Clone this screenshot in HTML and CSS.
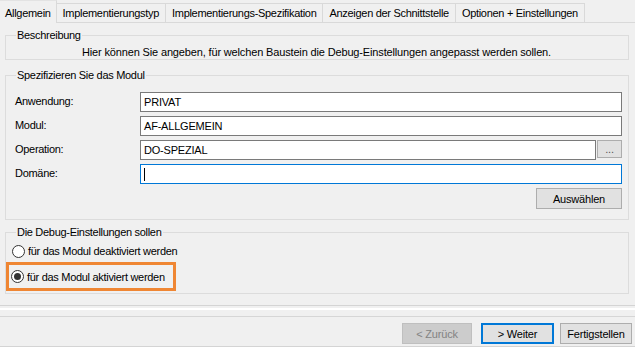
FILE: index.html
```html
<!DOCTYPE html>
<html lang="de">
<head>
  <meta charset="UTF-8">
  <title>Debug-Einstellungen</title>
  <link rel="stylesheet" href="styles.css">
</head>
<body>
  <div class="dialog">
    <div class="tabs">
      <div class="tab active">Allgemein</div>
      <div class="tab">Implementierungstyp</div>
      <div class="tab">Implementierungs-Spezifikation</div>
      <div class="tab">Anzeigen der Schnittstelle</div>
      <div class="tab">Optionen + Einstellungen</div>
    </div>

    <div class="panel">
      <!-- Beschreibung -->
      <fieldset class="group group-desc">
        <legend>Beschreibung</legend>
        <div class="desc">Hier können Sie angeben, für welchen Baustein die Debug-Einstellungen angepasst werden sollen.</div>
      </fieldset>

      <!-- Modul -->
      <fieldset class="group group-module">
        <legend>Spezifizieren Sie das Modul</legend>
        <div class="field">
          <label>Anwendung:</label>
          <div class="input">PRIVAT</div>
        </div>
        <div class="field">
          <label>Modul:</label>
          <div class="input">AF-ALLGEMEIN</div>
        </div>
        <div class="field">
          <label>Operation:</label>
          <div class="input">DO-SPEZIAL</div>
          <button class="btn btn-dots">...</button>
        </div>
        <div class="field">
          <label>Domäne:</label>
          <div class="input focused"><span class="caret"></span></div>
        </div>
        <div class="actions">
          <button class="btn btn-select">Auswählen</button>
        </div>
      </fieldset>

      <!-- Debug -->
      <fieldset class="group group-debug">
        <legend>Die Debug-Einstellungen sollen</legend>
        <div class="radio"><span class="dot"></span>für das Modul deaktiviert werden</div>
        <div class="highlight">
          <div class="radio"><span class="dot checked"></span>für das Modul aktiviert werden</div>
        </div>
      </fieldset>
    </div>

    <div class="footer">
      <button class="btn btn-nav disabled">&lt; Zurück</button>
      <button class="btn btn-nav primary">&gt; Weiter</button>
      <button class="btn btn-nav">Fertigstellen</button>
    </div>

    <div class="statusbar">
      <div class="cell cell-a"></div>
      <div class="cell cell-b"></div>
      <div class="cell"></div>
    </div>
  </div>
</body>
</html>
```

FILE: styles.css
```css
body {
  margin: 0;
  background: #f0f0f0;
  font-family: "Liberation Sans", Arial, sans-serif;
  font-size: 11px;
  letter-spacing: -0.3px;
  color: #000;
}

.dialog {
  width: 635px;
  height: 348px;
  display: flex;
  flex-direction: column;
  overflow: hidden;
}

/* tabs */
.tabs {
  display: flex;
  align-items: flex-end;
  height: 22px;
  border-bottom: 1px solid #d9d9d9;
}

.tab {
  height: 18px;
  line-height: 18px;
  padding: 0 6px;
  border: 1px solid #d9d9d9;
  border-bottom: none;
  border-left: none;
  background: #f0f0f0;
  white-space: nowrap;
}

.tab.active {
  height: 22px;
  line-height: 24px;
  padding: 0 5px 0 5px;
  margin-bottom: -1px;
  border-top-color: #e3e3e3;
}

/* main panel */
.panel {
  height: 277px;
  padding: 5px 6px 0 5px;
  border-bottom: 1px solid #d4d4d4;
  display: flex;
  flex-direction: column;
}

.group {
  margin: 0;
  padding: 0 6px 0 9px;
  border: 1px solid #dcdcdc;
  min-width: 0;
}

.group legend {
  padding: 0 1px;
  margin-left: 1px;
  line-height: 14px;
}

.group-desc {
  height: 30px;
}

.desc {
  line-height: 12px;
  padding: 4px 0 0 67px;
  letter-spacing: -0.15px;
}

.group-module {
  margin-top: 8px;
  height: 140px;
  padding-top: 10px;
}

.field {
  display: flex;
  align-items: center;
  height: 20px;
  margin-bottom: 4px;
}

.field label {
  width: 125px;
  padding-bottom: 3px;
}

.input {
  flex: 1;
  height: 18px;
  line-height: 18px;
  padding: 0 3px;
  background: #fff;
  border: 1px solid #7a7a7a;
  letter-spacing: -0.2px;
}

.input.focused {
  border-color: #0078d7;
  display: flex;
  align-items: center;
}

.caret {
  width: 1px;
  height: 13px;
  background: #000;
}

.btn {
  font-family: inherit;
  font-size: 11px;
  letter-spacing: -0.2px;
  color: #000;
  background: #e1e1e1;
  border: 1px solid #adadad;
  padding: 0;
  margin: 0;
}

.btn-dots {
  width: 25px;
  height: 18px;
  margin-left: 1px;
  align-self: flex-start;
  color: #555;
}

.actions {
  display: flex;
  justify-content: flex-end;
  margin-top: 4px;
}

.btn-select {
  width: 86px;
  height: 21px;
}

.group-debug {
  margin-top: 5px;
  height: 63px;
  padding: 4px 6px 0 6px;
}

.group-debug legend {
  margin-left: 4px;
}

.radio {
  display: flex;
  align-items: center;
  gap: 3px;
  height: 16px;
}

.dot {
  width: 11px;
  height: 11px;
  border: 1px solid #333;
  border-radius: 50%;
  background: #fff;
  display: flex;
  align-items: center;
  justify-content: center;
}

.dot.checked::after {
  content: "";
  width: 7px;
  height: 7px;
  border-radius: 50%;
  background: #333;
}

.highlight {
  margin: 3px 0 0 -6px;
  width: 162px;
  height: 23px;
  padding-left: 2px;
  border: 3px solid #ef8633;
  display: flex;
  align-items: center;
}

/* footer buttons */
.footer {
  margin-top: 2px;
  border-top: 2px solid #fff;
  box-shadow: inset 0 6px 0 #f0f0f0, inset 0 7px 0 #d6d6d6;
  height: 39px;
  display: flex;
  justify-content: flex-end;
  align-items: flex-start;
  padding: 13px 3px 0 0;
  box-sizing: border-box;
  border-bottom: 1px solid #d4d4d4;
}

.btn-nav {
  width: 72px;
  height: 21px;
  margin-left: 6px;
}

.btn-nav.disabled {
  width: 70px;
  background: #cccccc;
  border-color: #bfbfbf;
  color: #838383;
}

.btn-nav.primary {
  width: 73px;
  margin-left: 9px;
  border: 2px solid #0078d7;
}

.statusbar {
  border-top: 1px solid #fff;
  display: flex;
  flex: 1;
}

.cell {
  flex: 1;
}

.cell-a {
  flex: none;
  width: 373px;
  border-right: 1px solid #d4d4d4;
}

.cell-b {
  flex: none;
  width: 248px;
  border-right: 1px solid #d4d4d4;
}
```
